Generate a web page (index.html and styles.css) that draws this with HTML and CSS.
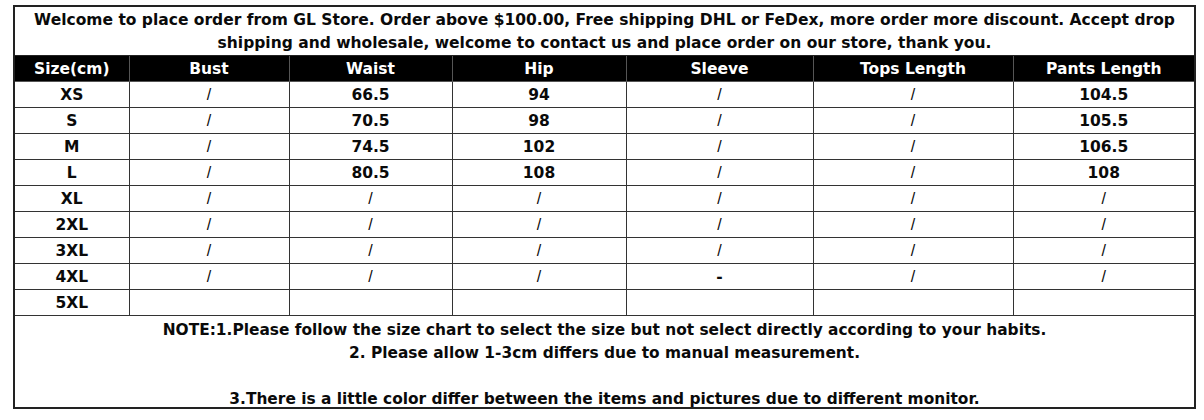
FILE: index.html
```html
<!DOCTYPE html>
<html>
<head>
<meta charset="utf-8">
<link rel="stylesheet" href="styles.css">
</head>
<body>
<div class="chart">
  <div class="intro">Welcome to place order from GL Store. Order above $100.00, Free shipping DHL or FeDex, more order more discount. Accept drop shipping and wholesale, welcome to contact us and place order on our store, thank you.</div>
  <table class="sizes">
    <colgroup>
      <col class="c1"><col class="c2"><col class="c3"><col class="c4"><col class="c5"><col class="c6"><col class="c7">
    </colgroup>
    <thead>
      <tr><th>Size(cm)</th><th>Bust</th><th>Waist</th><th>Hip</th><th>Sleeve</th><th>Tops Length</th><th>Pants Length</th></tr>
    </thead>
    <tbody>
      <tr><td>XS</td><td class="na">/</td><td>66.5</td><td>94</td><td class="na">/</td><td class="na">/</td><td>104.5</td></tr>
      <tr><td>S</td><td class="na">/</td><td>70.5</td><td>98</td><td class="na">/</td><td class="na">/</td><td>105.5</td></tr>
      <tr><td>M</td><td class="na">/</td><td>74.5</td><td>102</td><td class="na">/</td><td class="na">/</td><td>106.5</td></tr>
      <tr><td>L</td><td class="na">/</td><td>80.5</td><td>108</td><td class="na">/</td><td class="na">/</td><td>108</td></tr>
      <tr><td>XL</td><td class="na">/</td><td class="na">/</td><td class="na">/</td><td class="na">/</td><td class="na">/</td><td class="na">/</td></tr>
      <tr><td>2XL</td><td class="na">/</td><td class="na">/</td><td class="na">/</td><td class="na">/</td><td class="na">/</td><td class="na">/</td></tr>
      <tr><td>3XL</td><td class="na">/</td><td class="na">/</td><td class="na">/</td><td class="na">/</td><td class="na">/</td><td class="na">/</td></tr>
      <tr><td>4XL</td><td class="na">/</td><td class="na">/</td><td class="na">/</td><td>-</td><td class="na">/</td><td class="na">/</td></tr>
      <tr><td>5XL</td><td></td><td></td><td></td><td></td><td></td><td></td></tr>
    </tbody>
  </table>
  <div class="note">
    <p>NOTE:1.Please follow the size chart to select the size but not select directly according to your habits.</p>
    <p>2. Please allow 1-3cm differs due to manual measurement.</p>
    <p>&nbsp;</p>
    <p>3.There is a little color differ between the items and pictures due to different monitor.</p>
  </div>
</div>
</body>
</html>
```

FILE: styles.css
```css
html, body {
  margin: 0;
  padding: 0;
  background: #fff;
}
body {
  font-family: "DejaVu Sans", "Liberation Sans", sans-serif;
  font-weight: bold;
  color: #0a0a0a;
}
.chart {
  box-sizing: border-box;
  width: 1183px;
  margin: 5px 0 0 13px;
  border: 2px solid #222;
}
.intro {
  box-sizing: border-box;
  height: 49px;
  padding: 2px 4px 0;
  font-size: 15.5px;
  line-height: 23px;
  text-align: center;
  border-bottom: 1px solid #222;
}
.sizes {
  width: 100%;
  table-layout: fixed;
  border-collapse: collapse;
  border-style: hidden;
}
.c1 { width: 114px; }
.c2 { width: 160px; }
.c3 { width: 163px; }
.c4 { width: 174px; }
.c5 { width: 187px; }
.c6 { width: 200px; }
.c7 { width: auto; }
.sizes th, .sizes td {
  height: 25px;
  padding: 0;
  font-size: 15.5px;
  line-height: 18px;
  text-align: center;
  border: 1px solid #333;
}
.sizes th {
  background: #000;
  color: #fff;
  border-color: #555;
}
.sizes td.na {
  font-family: "Liberation Sans", sans-serif;
  font-weight: normal;
  font-size: 16px;
}
.note {
  border-top: 1px solid #333;
  height: 92px;
  box-sizing: border-box;
  padding-top: 3px;
  text-align: center;
  font-size: 15.4px;
}
.note p {
  margin: 0;
  line-height: 23px;
}
```
